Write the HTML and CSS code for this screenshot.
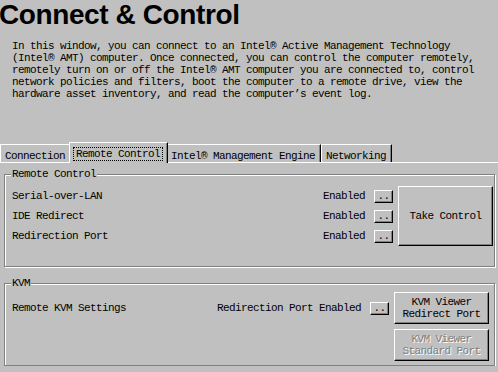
FILE: index.html
```html
<!DOCTYPE html>
<html lang="en">
<head>
  <meta charset="UTF-8">
  <title>Connect &amp; Control</title>
  <link rel="stylesheet" href="styles.css">
</head>
<body>
  <header class="intro">
    <h1>Connect &amp; Control</h1>
    <p>In this window, you can connect to an Intel® Active Management Technology<br>
    (Intel® AMT) computer. Once connected, you can control the computer remotely,<br>
    remotely turn on or off the Intel® AMT computer you are connected to, control<br>
    network policies and filters, boot the computer to a remote drive, view the<br>
    hardware asset inventory, and read the computer’s event log.</p>
  </header>

  <div class="tabs">
    <div class="tab">Connection</div>
    <div class="tab active"><span class="focus">Remote Control</span></div>
    <div class="tab">Intel® Management Engine</div>
    <div class="tab">Networking</div>
  </div>

  <div class="panel">
    <fieldset class="group group-remote">
      <legend>Remote Control</legend>
      <div class="group-body">
        <div class="rows">
          <div class="row">
            <span class="label">Serial-over-LAN</span>
            <span class="status">Enabled</span>
            <button class="btn more">..</button>
          </div>
          <div class="row">
            <span class="label">IDE Redirect</span>
            <span class="status">Enabled</span>
            <button class="btn more">..</button>
          </div>
          <div class="row">
            <span class="label">Redirection Port</span>
            <span class="status">Enabled</span>
            <button class="btn more">..</button>
          </div>
        </div>
        <button class="btn big">Take Control</button>
      </div>
    </fieldset>

    <fieldset class="group group-kvm">
      <legend>KVM</legend>
      <div class="group-body">
        <div class="row kvm-row">
          <span class="label">Remote KVM Settings</span>
          <span class="status">Redirection Port Enabled</span>
          <button class="btn more">..</button>
        </div>
        <div class="kvm-buttons">
          <button class="btn kvm">KVM Viewer<br>Redirect Port</button>
          <button class="btn kvm" disabled>KVM Viewer<br>Standard Port</button>
        </div>
      </div>
    </fieldset>
  </div>
</body>
</html>
```
FILE: styles.css
```css
body {
  margin: 0;
  background-color: #c0c0c0;
  color: #000;
  font-family: "Liberation Mono", monospace;
  font-size: 11px;
  line-height: 12px;
  letter-spacing: -0.6px;
}
h1 {
  margin: 0 0 0 -1px;
  font-family: "Liberation Sans", Arial, sans-serif;
  font-size: 28px;
  line-height: 30px;
  font-weight: bold;
  letter-spacing: -0.4px;
}
.intro p {
  margin: 10px 0 0;
  padding-left: 12px;
  white-space: nowrap;
}

/* tab strip */
.tabs {
  display: flex;
  align-items: flex-end;
  height: 20px;
  margin-top: 42px;
  border-bottom: 1px solid #fff;
}
.tab {
  padding: 5px 5px 0 4px;
  border-top: 1px solid #fff;
  border-left: 1px solid #fff;
  border-right: 1px solid #000;
  box-shadow: inset -1px 0 #808080;
  white-space: nowrap;
}
.tab.active {
  position: relative;
  z-index: 1;
  margin: 0 -2px -1px;
  padding: 5px 7px 3px 6px;
  background-color: #c0c0c0;
}
.focus {
  padding: 0 2px;
  margin: 0 -3px;
  border: 1px dotted #000;
}

/* group boxes */
.panel {
  padding: 5px 0 0 4px;
}
.group {
  box-sizing: border-box;
  width: 491px;
  min-width: 0;
  margin: 0;
  border: 1px solid #808080;
  box-shadow: inset 1px 1px #fff, 1px 1px #fff;
}
.group legend {
  margin-left: -1px;
  padding: 0 1px;
  background-color: #c0c0c0;
}
.group-remote {
  padding: 6px 1px 20px 7px;
}
.group-kvm {
  margin-top: 10px;
  padding: 3px 5px 4px 7px;
}
.group-body {
  display: flex;
  align-items: center;
  gap: 5px;
}
.rows {
  flex: 1;
}
.row {
  display: flex;
  align-items: center;
  height: 20px;
}
.label {
  flex: 1;
}
.kvm-row {
  flex: 1;
  align-self: flex-start;
  height: 32px;
}
.kvm-buttons {
  display: flex;
  flex-direction: column;
  gap: 5px;
}

/* classic 3d buttons */
.btn {
  box-sizing: border-box;
  padding: 0;
  font: inherit;
  letter-spacing: inherit;
  color: #000;
  background-color: #c0c0c0;
  border: 1px solid;
  border-color: #fff #000 #000 #fff;
  box-shadow: inset -1px -1px #808080;
}
.more {
  width: 19px;
  height: 13px;
  margin-left: 9px;
  line-height: 8px;
}
.big {
  width: 95px;
  height: 60px;
}
.kvm {
  width: 95px;
  height: 32px;
}
.kvm:disabled {
  color: #808080;
  text-shadow: 1px 1px #fff;
}
```
